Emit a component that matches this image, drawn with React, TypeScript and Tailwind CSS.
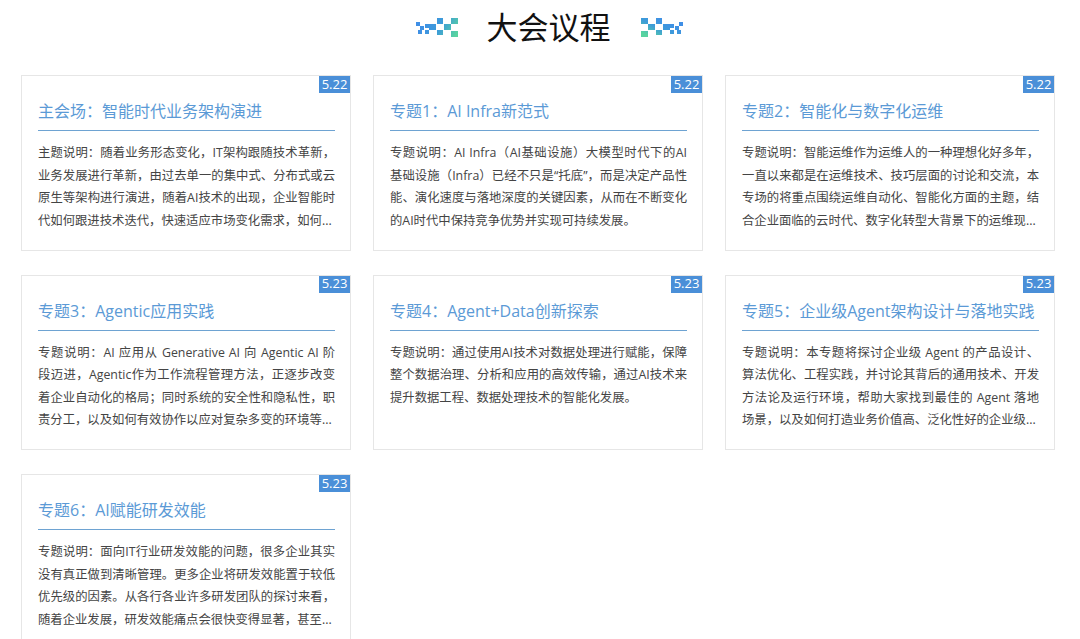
import React from "react";

interface Session {
  date: string;
  title: string;
  lines: string[];
}

const sessions: Session[] = [
  {
    date: "5.22",
    title: "主会场：智能时代业务架构演进",
    lines: [
      "主题说明：随着业务形态变化，IT架构跟随技术革新，",
      "业务发展进行革新，由过去单一的集中式、分布式或云",
      "原生等架构进行演进，随着AI技术的出现，企业智能时",
      "代如何跟进技术迭代，快速适应市场变化需求，如何...",
    ],
  },
  {
    date: "5.22",
    title: "专题1：AI Infra新范式",
    lines: [
      "专题说明：AI Infra（AI基础设施）大模型时代下的AI",
      "基础设施（Infra）已经不只是“托底”，而是决定产品性",
      "能、演化速度与落地深度的关键因素，从而在不断变化",
      "的AI时代中保持竞争优势并实现可持续发展。",
    ],
  },
  {
    date: "5.22",
    title: "专题2：智能化与数字化运维",
    lines: [
      "专题说明：智能运维作为运维人的一种理想化好多年，",
      "一直以来都是在运维技术、技巧层面的讨论和交流，本",
      "专场的将重点围绕运维自动化、智能化方面的主题，结",
      "合企业面临的云时代、数字化转型大背景下的运维现...",
    ],
  },
  {
    date: "5.23",
    title: "专题3：Agentic应用实践",
    lines: [
      "专题说明：AI 应用从 Generative AI 向 Agentic AI 阶",
      "段迈进，Agentic作为工作流程管理方法，正逐步改变",
      "着企业自动化的格局；同时系统的安全性和隐私性，职",
      "责分工，以及如何有效协作以应对复杂多变的环境等...",
    ],
  },
  {
    date: "5.23",
    title: "专题4：Agent+Data创新探索",
    lines: [
      "专题说明：通过使用AI技术对数据处理进行赋能，保障",
      "整个数据治理、分析和应用的高效传输，通过AI技术来",
      "提升数据工程、数据处理技术的智能化发展。",
    ],
  },
  {
    date: "5.23",
    title: "专题5：企业级Agent架构设计与落地实践",
    lines: [
      "专题说明：本专题将探讨企业级 Agent 的产品设计、",
      "算法优化、工程实践，并讨论其背后的通用技术、开发",
      "方法论及运行环境，帮助大家找到最佳的 Agent 落地",
      "场景，以及如何打造业务价值高、泛化性好的企业级...",
    ],
  },
  {
    date: "5.23",
    title: "专题6：AI赋能研发效能",
    lines: [
      "专题说明：面向IT行业研发效能的问题，很多企业其实",
      "没有真正做到清晰管理。更多企业将研发效能置于较低",
      "优先级的因素。从各行各业许多研发团队的探讨来看，",
      "随着企业发展，研发效能痛点会很快变得显著，甚至...",
    ],
  },
];

// x, y, w, h of each pixel block in the heading ornament
const pixels: Array<[number, number, number, number]> = [
  [0, 4, 4, 4], [4, 8, 4, 4], [2, 12, 4, 4], [9, 6, 4, 4], [9, 12, 4, 4], [13, 6, 7, 6],
  [21, 0, 6, 6], [21, 12, 6, 5], [28, 6, 7, 6], [35, 0, 7, 6], [35, 13, 7, 6],
];

function Ornament({ id, flip }: { id: string; flip?: boolean }) {
  const axis = flip ? { x1: 20, y1: 0, x2: 30, y2: 20 } : { x1: 8, y1: 2, x2: 38, y2: 20 };
  return (
    <svg width="42" height="20" viewBox="0 0 42 20" className={flip ? "-scale-x-100" : ""}>
      <defs>
        <linearGradient id={id} gradientUnits="userSpaceOnUse" {...axis}>
          <stop offset="0" stopColor="#3f8fe6" />
          <stop offset="0.5" stopColor="#3d9cd8" />
          <stop offset="1" stopColor="#58d3a0" />
        </linearGradient>
      </defs>
      {pixels.map(([x, y, w, h]) => (
        <rect key={`${x}-${y}`} x={x} y={y} width={w} height={h} fill={`url(#${id})`} />
      ))}
    </svg>
  );
}

function SessionCard({ session }: { session: Session }) {
  return (
    <div className="relative h-[175.5px] border border-[#e6e6e6] bg-white pr-[15px] pl-[16px] pt-[21px]">
      <div className="absolute right-0 top-0 flex h-[17px] w-[31px] items-center justify-center bg-[#4a8fd8] text-[13px] text-white">
        {session.date}
      </div>
      <div className="h-[34px] border-b border-[#6ea3d2] text-[16px] leading-[28px] whitespace-nowrap text-[#5b9ad6]">
        {session.title}
      </div>
      <div className="mt-[11px] text-[12.35px] leading-[22.6px] text-[#444444]">
        {session.lines.map((line, i) => (
          <div
            key={line}
            className={i < session.lines.length - 1 ? "whitespace-nowrap [text-align-last:justify]" : "whitespace-nowrap"}
          >
            {line}
          </div>
        ))}
      </div>
    </div>
  );
}

export default function App() {
  return (
    <div className="h-[639px] overflow-hidden bg-white font-['Open_Sans','Noto_Sans_CJK_SC',sans-serif]">
      <div className="flex h-[75px] items-start justify-center pt-[8px] pl-[18px]">
        <div className="mt-[10px] mr-[29px]"><Ornament id="orn-left" /></div>
        <h1 className="text-[31px] leading-[38px] text-[#111111]">大会议程</h1>
        <div className="mt-[10px] ml-[30px]"><Ornament id="orn-right" flip /></div>
      </div>
      <div className="grid grid-cols-[330px_330px_330px] gap-x-[22px] gap-y-[24px] px-[21px]">
        {sessions.map(s => (
          <SessionCard key={s.title} session={s} />
        ))}
      </div>
    </div>
  );
}
